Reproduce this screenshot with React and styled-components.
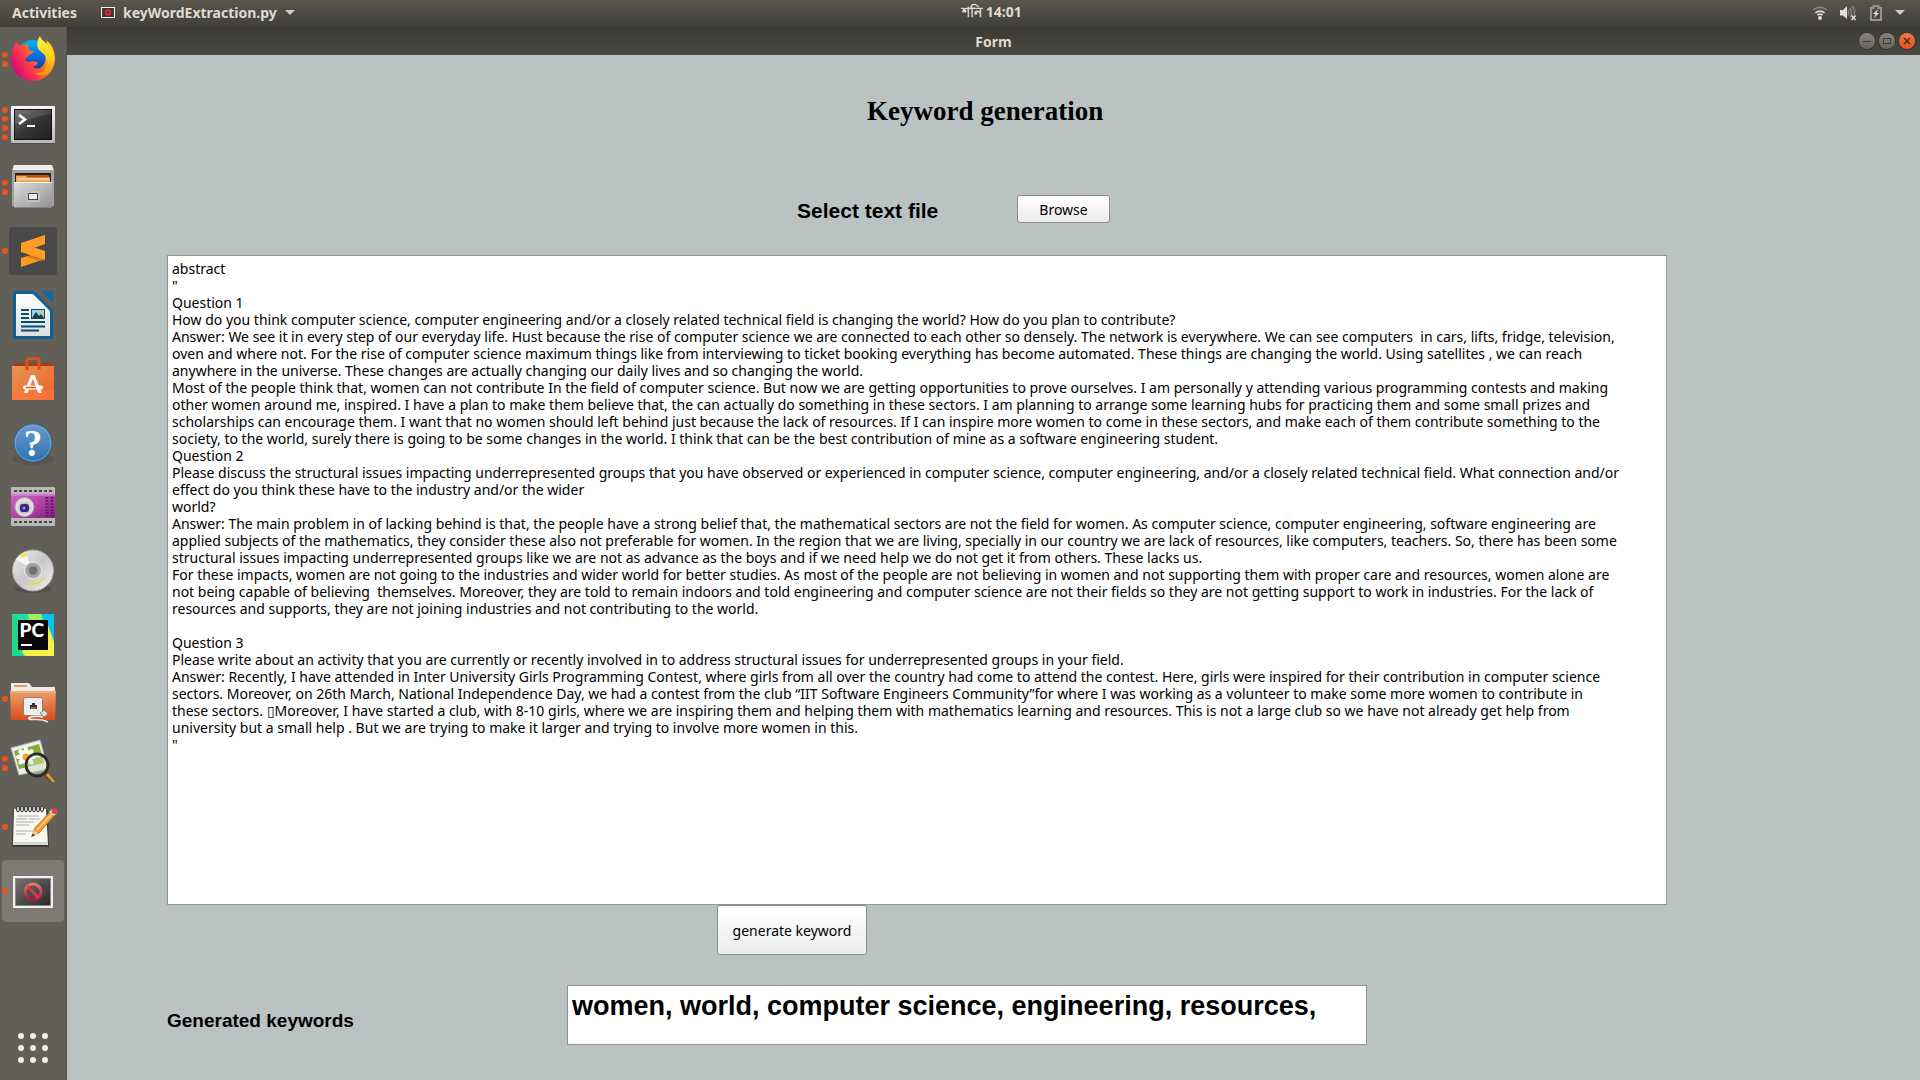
import React from "react";
import styled, { createGlobalStyle } from "styled-components";

const UI_FONT = '"Noto Sans", "Open Sans", sans-serif';

const GlobalStyle = createGlobalStyle`
  * { box-sizing: border-box; }
  body { margin: 0; background: #bac3c2; font-family: ${UI_FONT}; font-size: 14px; }
  button { font: inherit; }
`;

const Desktop = styled.div`
  display: flex;
  flex-direction: column;
  min-height: 100vh;
`;

const TopBar = styled.header`
  display: grid;
  grid-template-columns: 1fr auto 1fr;
  align-items: center;
  height: 27px;
  padding: 0 15px 2px 12px;
  background: linear-gradient(#59564d, #403f3a);
  color: #dfdbd2;
`;

const BarGroup = styled.div`
  display: flex;
  align-items: center;
  justify-content: ${(p) => (p.$end ? "flex-end" : "flex-start")};
  gap: ${(p) => p.$gap}px;
`;

const BarButton = styled.button`
  display: flex;
  align-items: center;
  gap: 8px;
  padding: 0;
  border: 0;
  background: none;
  color: inherit;
  font-size: 14px;
  font-weight: 700;
  line-height: 20px;
`;

const Clock = styled(BarButton)`
  padding: 0 0 2px 67px;
`;

const Workspace = styled.div`
  display: flex;
  flex: 1;
`;

const Dock = styled.nav`
  display: flex;
  flex-direction: column;
  gap: 2px;
  width: 67px;
  padding: 1px 2px;
  border-right: 1px solid #54514a;
  background: #625f58;
`;

const DockItem = styled.button`
  position: relative;
  display: flex;
  align-items: center;
  justify-content: center;
  width: 62px;
  height: 62px;
  margin-top: ${(p) => (p.$last ? "auto" : "0")};
  padding: 0;
  border: 0;
  border-radius: 4px;
  background: ${(p) => (p.$active ? "#7d7a74" : "transparent")};
`;

const Dots = styled.span`
  position: absolute;
  left: 0;
  display: flex;
  flex-direction: column;
  gap: 3px;
`;

const Dot = styled.i`
  width: 6px;
  height: 6px;
  border-radius: 50%;
  background: #e95420;
`;

const Window = styled.section`
  display: flex;
  flex: 1;
  flex-direction: column;
  min-width: 0;
`;

const TitleBar = styled.div`
  display: grid;
  grid-template-columns: 1fr auto 1fr;
  align-items: center;
  height: 28px;
  padding: 0 5px;
  background: linear-gradient(#3a3935, #4b4943);
  color: #dfdbd2;
  font-size: 14px;
  font-weight: 700;
`;

const WindowControls = styled.div`
  display: flex;
  grid-column: 3;
  justify-content: flex-end;
  gap: 4px;
`;

const WindowButton = styled.button`
  width: 16px;
  height: 16px;
  padding: 0;
  border: 0;
  border-radius: 50%;
  background: ${(p) => (p.$close ? "linear-gradient(#f4784f, #e2501f)" : "linear-gradient(#85837c, #65635c)")};
  box-shadow: 0 0 0 1px #35342f;

  svg { display: block; }
`;

const Form = styled.form`
  display: flex;
  flex: 1;
  flex-direction: column;
  padding: 40px 253px 35px 100px;
  background: #bac3c2;
  color: #000;
`;

const Heading = styled.h1`
  margin: 0 0 68px;
  padding-left: 700px;
  font: 700 27px/32px "Liberation Serif", serif;
`;

const Row = styled.div`
  display: flex;
  align-items: center;
  gap: ${(p) => p.$gap || 0}px;
  padding-left: ${(p) => p.$indent || 0}px;
  margin-bottom: ${(p) => p.$after || 0}px;
`;

const Label = styled.label`
  flex: none;
  width: ${(p) => p.$width}px;
  padding-top: ${(p) => p.$drop || 0}px;
  font: 700 ${(p) => p.$size}px/24px "Liberation Sans", sans-serif;
`;

const PushButton = styled.button`
  width: ${(p) => p.$width}px;
  height: ${(p) => p.$height}px;
  padding: 0;
  border: 1px solid #8b8f8e;
  border-radius: 3px;
  background: linear-gradient(#fff, #ececec);
  color: #000;
`;

const TextBox = styled.textarea`
  display: block;
  width: 100%;
  height: 650px;
  padding: 4px;
  border: 1px solid #8f9695;
  border-radius: 0;
  outline: 0;
  background: #fff;
  color: #000;
  font: 14px/17px ${UI_FONT};
  white-space: pre;
  resize: none;
  overflow: hidden;
`;

const Keywords = styled.input`
  width: 800px;
  height: 60px;
  padding: 0 4px 18px;
  border: 1px solid #8f9695;
  background: #fff;
  color: #000;
  font: 700 27px/36px "Liberation Sans", sans-serif;
`;

const Icon = ({ size = 48, children }) => (
  <svg width={size} height={size} viewBox="0 0 48 48" aria-hidden="true">{children}</svg>
);

const Gradient = ({ id, from, mid, to, diagonal }) => (
  <linearGradient id={id} x1="0" y1="0" x2={diagonal ? 1 : 0} y2="1">
    <stop offset="0" stopColor={from} />
    {mid && <stop offset=".5" stopColor={mid} />}
    <stop offset="1" stopColor={to} />
  </linearGradient>
);

const Firefox = () => (
  <Icon>
    <defs>
      <linearGradient id="ffBody" x1="1" y1=".2" x2="0" y2=".8">
        <stop offset="0" stopColor="#ffe226" /><stop offset=".3" stopColor="#ff980e" />
        <stop offset=".62" stopColor="#ff3647" /><stop offset="1" stopColor="#c60084" />
      </linearGradient>
      <Gradient id="ffGlobe" from="#00b3f4" mid="#0a64d8" to="#3b1a78" />
      <Gradient id="ffFlame" from="#fff44f" mid="#ffd21c" to="#ff8a16" />
    </defs>
    <circle cx="24" cy="23" r="18" fill="url(#ffGlobe)" />
    <path d="M7.500 6.500 C8.500 9 10 10.500 12 11 C15 9 18 9 20 10 C18.500 12 19 14 20.500 15.500 L25 16 C24 19 20 19.500 19 21 C18.500 23 16.500 23 16 24.500 C17.500 28 21 26.500 23 26.500 C25 26 28 27 28.500 28 C28 30.500 25.500 30.500 24 32 C29 36 36 32 36.500 24 C37 19 36 16 34 13 C37 11 38.500 8 37.500 5.500 C43 9 45.500 16 46 23 C46 36 36 46 24 46 C11 46 2 36 2 24 C2 18 4 12 7.500 6.500Z" fill="url(#ffBody)" />
    <path d="M31 1 C32 5 37 7 41 13 C46 19 46 28 43 34 C39 41 31 42 26 38 C33 39 38 34 38 27 C38 20 33 18 30 15 C27 11 28 5 31 1Z" fill="url(#ffFlame)" />
  </Icon>
);

const Terminal = () => (
  <Icon>
    <defs><Gradient id="tmFrame" from="#f7f7f7" to="#b8b8b8" /><Gradient id="tmScreen" from="#686868" mid="#343434" to="#202020" diagonal /></defs>
    <rect x="2" y="42" width="44" height="3" rx="1" fill="#3f3d38" opacity=".5" />
    <rect x="2" y="7" width="44" height="37" rx="1" fill="url(#tmFrame)" />
    <rect x="5" y="10" width="38" height="31" fill="#111" />
    <rect x="6" y="11" width="36" height="29" fill="url(#tmScreen)" />
    <path d="M6 11 H42 V15 C30 17 20 20 6 26Z" fill="#fff" opacity=".1" />
    <path d="M10 16 L16 20.500 L10 25" fill="none" stroke="#fff" strokeWidth="2.500" />
    <path d="M18 27 H26" stroke="#fff" strokeWidth="2" />
  </Icon>
);

const Files = () => (
  <Icon>
    <defs><Gradient id="flBox" from="#dcdcdc" to="#919191" diagonal /></defs>
    <path d="M5 2 H43 L45 8 V43 H3 V8Z" fill="#a2a2a2" />
    <path d="M5 2 H43 L44.500 7 H3.500Z" fill="#eee" />
    <rect x="6" y="10" width="36" height="10" fill="#222" />
    <path d="M7 12 H40 L41 19 H7Z" fill="#c34c17" />
    <path d="M7 13 H17 L19 14.500 H41 V20 H7Z" fill="#f0a95b" />
    <path d="M8 16 H40" stroke="#fff2dc" />
    <path d="M5 19 H43 V45 H5Z" fill="url(#flBox)" />
    <path d="M5 19.500 H43" stroke="#f6f6f6" />
    <path d="M5 44.500 H43" stroke="#858585" />
    <rect x="17" y="28" width="14" height="11" rx="2" fill="#c4c4c4" />
    <rect x="19.500" y="30.500" width="9" height="6" fill="#eee" stroke="#444" />
  </Icon>
);

const Sublime = () => (
  <Icon>
    <rect width="48" height="48" rx="3" fill="#494949" />
    <path d="M36 8 V17 L25 21 L12 25 V16Z" fill="#ff9d25" />
    <path d="M12 31 L36 24 V32 L12 40Z" fill="#ff9820" />
    <path d="M12 16 L12 25 L36 33 V24 L24 20Z" fill="#ff9d25" />
    <path d="M21 28 L36 33 L30 34 L19 30Z" fill="#d67918" />
  </Icon>
);

const Writer = () => (
  <Icon>
    <defs><Gradient id="wrPage" from="#fff" to="#dedede" /></defs>
    <path d="M6 0 H25 L44 19 V46 Q44 48 42 48 H6 Q4 48 4 46 V2 Q4 0 6 0Z" fill="#0b6097" />
    <path d="M7 3 H24 L41 20 V45 H7Z" fill="url(#wrPage)" />
    <path d="M32 0 H44 V12 Z" fill="#0b6ba6" />
    <path d="M12 19 H20 M12 23 H20 M12 27 H20 M12 31 H36 M12 35.500 H36 M12 39.500 H30" stroke="#074d78" strokeWidth="2" />
    <rect x="22.500" y="18.500" width="13" height="9" fill="#8fd3ef" stroke="#164a68" />
    <path d="M23 27 L27 21 L30 25 L32 23 L35 27Z" fill="#263b42" />
    <circle cx="33.500" cy="20.500" r="1.500" fill="#f2cb29" />
  </Icon>
);

const Software = () => (
  <Icon>
    <defs><Gradient id="swBag" from="#e79555" to="#ef6225" diagonal /></defs>
    <path d="M6 8 H42 L45 12 H3Z" fill="#a83b12" />
    <path d="M3 11 H45 V45 H3Z" fill="url(#swBag)" />
    <path d="M3 35 H45 V45 H3Z" fill="#ff7b3f" opacity=".6" />
    <path d="M18 15 V6 Q18 3.500 21 3.500 H27 Q30 3.500 30 6 V15" fill="none" stroke="#d64f1e" strokeWidth="3" />
    <text x="24" y="38" textAnchor="middle" fontFamily="Lato, sans-serif" fontWeight="700" fontSize="25" fill="#fff">A</text>
    <path d="M16 32.500 H32" stroke="#fff" strokeWidth="4" strokeLinecap="round" />
    <path d="M17 32.500 H27" stroke="#e2521d" strokeWidth="1.500" />
  </Icon>
);

const Help = () => (
  <Icon>
    <defs><Gradient id="hpBall" from="#6b9bd0" to="#2f72ae" /></defs>
    <ellipse cx="24" cy="40" rx="21" ry="6" fill="#45433e" opacity=".3" />
    <circle cx="24" cy="24" r="19" fill="url(#hpBall)" stroke="#275f95" />
    <circle cx="24" cy="24" r="18" fill="none" stroke="#94bbe2" opacity=".6" />
    <text x="24" y="37" textAnchor="middle" fontFamily="Liberation Serif, serif" fontWeight="700" fontSize="37" fill="#fff">?</text>
  </Icon>
);

const Recorder = () => (
  <Icon>
    <defs><Gradient id="rcBody" from="#d060c8" mid="#b344a9" to="#7d217b" diagonal /></defs>
    <rect x="2" y="4" width="44" height="39" rx="1" fill="#b9b9b7" />
    <rect x="2" y="11" width="44" height="24" fill="url(#rcBody)" />
    <path d="M2 12 H46" stroke="#ec95e8" />
    <path d="M5 8 H44 M5 39 H44" stroke="#454545" strokeWidth="2" strokeDasharray="3 2" />
    <path d="M38 14 V34 M43 14 V34" stroke="#6f1b70" strokeWidth="3" strokeDasharray="2 1" />
    <circle cx="15.500" cy="24" r="9.500" fill="#deded9" stroke="#aaa" />
    <circle cx="15.500" cy="25" r="6" fill="#bfbfc1" />
    <rect x="11" y="21" width="9" height="8" rx="3" fill="#41217f" />
    <circle cx="15" cy="25" r="1.500" fill="#8c9bff" />
  </Icon>
);

const Disc = () => (
  <Icon>
    <defs><Gradient id="dsPlate" from="#eeeeec" mid="#c8c8cc" to="#f2f2ee" diagonal /></defs>
    <ellipse cx="24" cy="42" rx="19" ry="4" fill="#45433e" opacity=".5" />
    <circle cx="24" cy="23.500" r="20.500" fill="url(#dsPlate)" stroke="#a7a7a5" />
    <path d="M24 23 L7 12 A20 20 0 0 1 16 5Z" fill="#fff" opacity=".8" />
    <path d="M12 10 A17 17 0 0 1 17 7" fill="none" stroke="#efe34e" strokeWidth="4" />
    <path d="M35 31 A14 14 0 0 1 19 36" fill="none" stroke="#e8d951" strokeWidth="2" />
    <circle cx="24" cy="23.500" r="8.500" fill="#aaaab0" stroke="#ececec" />
    <circle cx="24" cy="23.500" r="5" fill="#71706a" stroke="#999" strokeWidth="2" />
  </Icon>
);

const PyCharm = () => (
  <Icon>
    <rect x="3" y="3" width="42" height="42" fill="#21d789" />
    <path d="M3 3 H30 L22 18Z" fill="#25dda4" />
    <path d="M19 3 H35 L40 20 L20 12Z" fill="#9cec61" />
    <path d="M32 3 H45 V32 L38 20Z" fill="#07c3f2" />
    <path d="M8 45 L18 36 L39 14 L45 31 V45Z" fill="#f6f04a" />
    <path d="M3 26 L16 45 H3Z" fill="#20d991" />
    <rect x="9" y="9" width="30" height="30" fill="#080808" />
    <text x="10.500" y="26" fontFamily="Lato, sans-serif" fontWeight="900" fontSize="19" fill="#fff">PC</text>
    <rect x="12" y="33" width="11" height="2" fill="#fff" />
  </Icon>
);

const RemoteFolder = () => (
  <Icon>
    <defs><Gradient id="rfFolder" from="#eea068" to="#dc4b1b" /></defs>
    <path d="M2 8 H20 L23 12 H46 V20 H2Z" fill="#ececea" />
    <path d="M5 11 H18" stroke="#e99867" strokeWidth="2" />
    <path d="M1 16 H47 L46 45 H2Z" fill="url(#rfFolder)" />
    <path d="M2 17 H46" stroke="#f6bd91" />
    <rect x="14.500" y="22.500" width="19" height="18" rx="2" fill="#eee" stroke="#858585" />
    <path d="M21 30 H23 V28 H26 V30 H28 V34 H21Z" fill="#333" />
    <path d="M22 33 H27" stroke="#ccb847" />
    <path d="M31 38 L35 35 L39 39 L35 42Z" fill="#ddd" stroke="#888" />
    <path d="M34 42 C27 40 18 42 20 44 C24 46 30 42 39 47" fill="none" stroke="#eee" strokeWidth="1.500" />
  </Icon>
);

const Daisy = () => (
  <g>
    {[0, 45, 90, 135, 180, 225, 270, 315].map((a) => (
      <ellipse key={a} cx="17" cy="13" rx="2.500" ry="5" fill="#fff" transform={`rotate(${a} 17 18)`} />
    ))}
    <circle cx="17" cy="18" r="3.500" fill="#f1a51d" />
  </g>
);

const ImageViewer = () => (
  <Icon>
    <path d="M2 9 L31 1 L39 30 L10 36Z" fill="#efefed" stroke="#b6b6b0" />
    <path d="M5 12 L30 5 L35 24 L10 30Z" fill="#84ad36" />
    <Daisy />
    <path d="M36 34 L45 43" stroke="#69421b" strokeWidth="5" />
    <path d="M38 35 L45 43" stroke="#d19a43" strokeWidth="3" />
    <circle cx="28" cy="26" r="11" fill="#cdddb0" fillOpacity=".5" stroke="#2b2b29" strokeWidth="3" />
    <path d="M20 22 C22 18 27 16 31 18" fill="none" stroke="#fff" strokeWidth="2" opacity=".7" />
  </Icon>
);

const Notes = () => (
  <Icon>
    <path d="M4 7 H39 L40 44 H3Z" fill="#3b3c38" />
    <path d="M5 6 H37 L39 42 H4Z" fill="#f8f8f4" />
    <path d="M5 39 H38 V42 H4Z" fill="#d6d8cf" />
    <path d="M8 13 H30 M7 16 H18 M20 16 H31 M7 19 H25 M7 22 H20 M7 28 H24 M7 31 H17" stroke="#aaa" />
    {[9, 13, 17, 21, 25, 29, 33].map((x) => <ellipse key={x} cx={x} cy="6" rx="1.500" ry="3" fill="#ddd" stroke="#333" />)}
    <path d="M23 33 L26 25 L41 9 L45 13 L30 30Z" fill="#f69c32" stroke="#c56c15" />
    <path d="M28 27 L43 11" stroke="#ffd18a" strokeWidth="1.500" />
    <path d="M23 33 L25 27 L29 31Z" fill="#f2cf9a" /><path d="M22 34 L24 31 L26 32Z" fill="#111" />
    <path d="M40 9 L43 6 L48 10 L45 13Z" fill="#ddd" /><circle cx="45.500" cy="8" r="3" fill="#e3424b" />
  </Icon>
);

const Blocked = ({ size }) => (
  <Icon size={size}>
    <defs><Gradient id="blScreen" from="#727272" to="#292929" diagonal /><Gradient id="blRing" from="#ef765c" to="#b41341" /></defs>
    <rect x="4" y="9" width="40" height="32" fill="#f0f0ee" />
    <rect x="6.500" y="11.500" width="35" height="27" fill="url(#blScreen)" stroke="#888" />
    <circle cx="24" cy="25" r="8" fill="none" stroke="url(#blRing)" strokeWidth="3" />
    <path d="M18.500 19 L29.500 31" stroke="#d33a43" strokeWidth="3" />
  </Icon>
);

const AppGrid = () => (
  <Icon>
    {[12, 24, 36].map((y) => [12, 24, 36].map((x) => <circle key={`${x}-${y}`} cx={x} cy={y} r="3" fill="#eeeeec" />))}
  </Icon>
);

const Caret = () => (
  <svg width="10" height="6" viewBox="0 0 10 6" aria-hidden="true"><path d="M0 0 H10 L5 5Z" fill="#cfccc4" /></svg>
);

const TaskIcon = () => (
  <svg width="14" height="12" viewBox="0 0 14 12" aria-hidden="true">
    <rect x=".500" y=".500" width="13" height="10" fill="#45332f" stroke="#eee" />
    <circle cx="7" cy="5.500" r="2.500" fill="none" stroke="#d9303a" strokeWidth="1.500" />
    <path d="M5 4 L9 7" stroke="#d9303a" />
  </svg>
);

const Wifi = () => (
  <svg width="14" height="14" viewBox="0 0 14 14" fill="none" strokeWidth="1.700" aria-hidden="true">
    <path d="M.500 4 C4 .500 10 .500 13.500 4" stroke="#8a877f" />
    <path d="M2.500 7 C5 4.500 9 4.500 11.500 7" stroke="#dfdbd2" />
    <path d="M4.500 9.200 C6 7.800 8 7.800 9.500 9.200" stroke="#dfdbd2" />
    <circle cx="7" cy="12" r="2" fill="#dfdbd2" />
  </svg>
);

const Muted = () => (
  <svg width="17" height="16" viewBox="0 0 17 16" fill="none" aria-hidden="true">
    <path d="M0 5 H3 L7 1 V14 L3 10.500 H0Z" fill="#dfdbd2" />
    <path d="M8 5 Q9.500 8 8 10.500 M10 3 Q13 8 10 12 M12 1 Q16 6 14 10" stroke="#85827a" strokeWidth="1.500" />
    <path d="M11.500 10.500 L15.500 15 M15.500 10.500 L11.500 15" stroke="#dfdbd2" strokeWidth="1.700" />
  </svg>
);

const Battery = () => (
  <svg width="12" height="16" viewBox="0 0 12 16" aria-hidden="true">
    <path d="M1 3 H3.500 V1 H8.500 V3 H11 V15 H1Z" fill="none" stroke="#96938b" strokeWidth="2" />
    <path d="M8 4 L3 9 H5.500 L4 13 L9 8 H6.500Z" fill="#dfdbd2" />
  </svg>
);

const APPS = [
  ["Firefox", Firefox, 2], ["Terminal", Terminal, 4], ["Files", Files, 2], ["Sublime Text", Sublime, 1],
  ["LibreOffice Writer", Writer, 0], ["Ubuntu Software", Software, 0], ["Help", Help, 0],
  ["Screen recorder", Recorder, 0], ["Disc", Disc, 0], ["PyCharm", PyCharm, 0],
  ["Remote folder", RemoteFolder, 1], ["Image viewer", ImageViewer, 2], ["Text editor", Notes, 1],
  ["keyWordExtraction.py", Blocked, 1],
];

const DOCUMENT = `abstract
"
Question 1
How do you think computer science, computer engineering and/or a closely related technical field is changing the world? How do you plan to contribute?
Answer: We see it in every step of our everyday life. Hust because the rise of computer science we are connected to each other so densely. The network is everywhere. We can see computers  in cars, lifts, fridge, television,
oven and where not. For the rise of computer science maximum things like from interviewing to ticket booking everything has become automated. These things are changing the world. Using satellites , we can reach
anywhere in the universe. These changes are actually changing our daily lives and so changing the world.
Most of the people think that, women can not contribute In the field of computer science. But now we are getting opportunities to prove ourselves. I am personally y attending various programming contests and making
other women around me, inspired. I have a plan to make them believe that, the can actually do something in these sectors. I am planning to arrange some learning hubs for practicing them and some small prizes and
scholarships can encourage them. I want that no women should left behind just because the lack of resources. If I can inspire more women to come in these sectors, and make each of them contribute something to the
society, to the world, surely there is going to be some changes in the world. I think that can be the best contribution of mine as a software engineering student.
Question 2
Please discuss the structural issues impacting underrepresented groups that you have observed or experienced in computer science, computer engineering, and/or a closely related technical field. What connection and/or
effect do you think these have to the industry and/or the wider
world?
Answer: The main problem in of lacking behind is that, the people have a strong belief that, the mathematical sectors are not the field for women. As computer science, computer engineering, software engineering are
applied subjects of the mathematics, they consider these also not preferable for women. In the region that we are living, specially in our country we are lack of resources, like computers, teachers. So, there has been some
structural issues impacting underrepresented groups like we are not as advance as the boys and if we need help we do not get it from others. These lacks us.
For these impacts, women are not going to the industries and wider world for better studies. As most of the people are not believing in women and not supporting them with proper care and resources, women alone are
not being capable of believing  themselves. Moreover, they are told to remain indoors and told engineering and computer science are not their fields so they are not getting support to work in industries. For the lack of
resources and supports, they are not joining industries and not contributing to the world.

Question 3
Please write about an activity that you are currently or recently involved in to address structural issues for underrepresented groups in your field.
Answer: Recently, I have attended in Inter University Girls Programming Contest, where girls from all over the country had come to attend the contest. Here, girls were inspired for their contribution in computer science
sectors. Moreover, on 26th March, National Independence Day, we had a contest from the club “IIT Software Engineers Community”for where I was working as a volunteer to make some more women to contribute in
these sectors. ▯Moreover, I have started a club, with 8-10 girls, where we are inspiring them and helping them with mathematics learning and resources. This is not a large club so we have not already get help from
university but a small help . But we are trying to make it larger and trying to involve more women in this.
"`;

export default function App() {
  return (
    <Desktop>
      <GlobalStyle />
      <TopBar>
        <BarGroup $gap={24}>
          <BarButton>Activities</BarButton>
          <BarButton><TaskIcon />keyWordExtraction.py<Caret /></BarButton>
        </BarGroup>
        <Clock>শনি 14:01</Clock>
        <BarGroup $end $gap={13}><Wifi /><Muted /><Battery /><Caret /></BarGroup>
      </TopBar>
      <Workspace>
        <Dock aria-label="Dock">
          {APPS.map(([name, Glyph, windows], i) => (
            <DockItem key={name} aria-label={name} $active={i === APPS.length - 1}>
              <Dots>{Array.from({ length: windows }, (_, n) => <Dot key={n} />)}</Dots>
              <Glyph />
            </DockItem>
          ))}
          <DockItem aria-label="Show applications" $last><AppGrid /></DockItem>
        </Dock>
        <Window>
          <TitleBar>
            <span />
            <span>Form</span>
            <WindowControls>
              <WindowButton aria-label="Minimize"><svg width="16" height="16"><path d="M4 8.500 H12" stroke="#3c3b37" /></svg></WindowButton>
              <WindowButton aria-label="Maximize"><svg width="16" height="16"><rect x="4.500" y="5.500" width="7" height="5" fill="none" stroke="#3c3b37" /></svg></WindowButton>
              <WindowButton aria-label="Close" $close><svg width="16" height="16"><path d="M5 5 L11 11 M11 5 L5 11" stroke="#4b2a1b" strokeWidth="1.500" /></svg></WindowButton>
            </WindowControls>
          </TitleBar>
          <Form onSubmit={(e) => e.preventDefault()}>
            <Heading>Keyword generation</Heading>
            <Row $indent={630} $after={32}>
              <Label htmlFor="browse" $size={21} $width={220} $drop={4}>Select text file</Label>
              <PushButton id="browse" type="button" $width={93} $height={28}>Browse</PushButton>
            </Row>
            <TextBox aria-label="Text file content" defaultValue={DOCUMENT} spellCheck={false} />
            <Row $indent={550} $after={30}>
              <PushButton type="submit" $width={150} $height={50}>generate keyword</PushButton>
            </Row>
            <Row>
              <Label htmlFor="keywords" $size={19} $width={400} $drop={12}>Generated keywords</Label>
              <Keywords id="keywords" defaultValue="women, world, computer science, engineering, resources," />
            </Row>
          </Form>
        </Window>
      </Workspace>
    </Desktop>
  );
}
